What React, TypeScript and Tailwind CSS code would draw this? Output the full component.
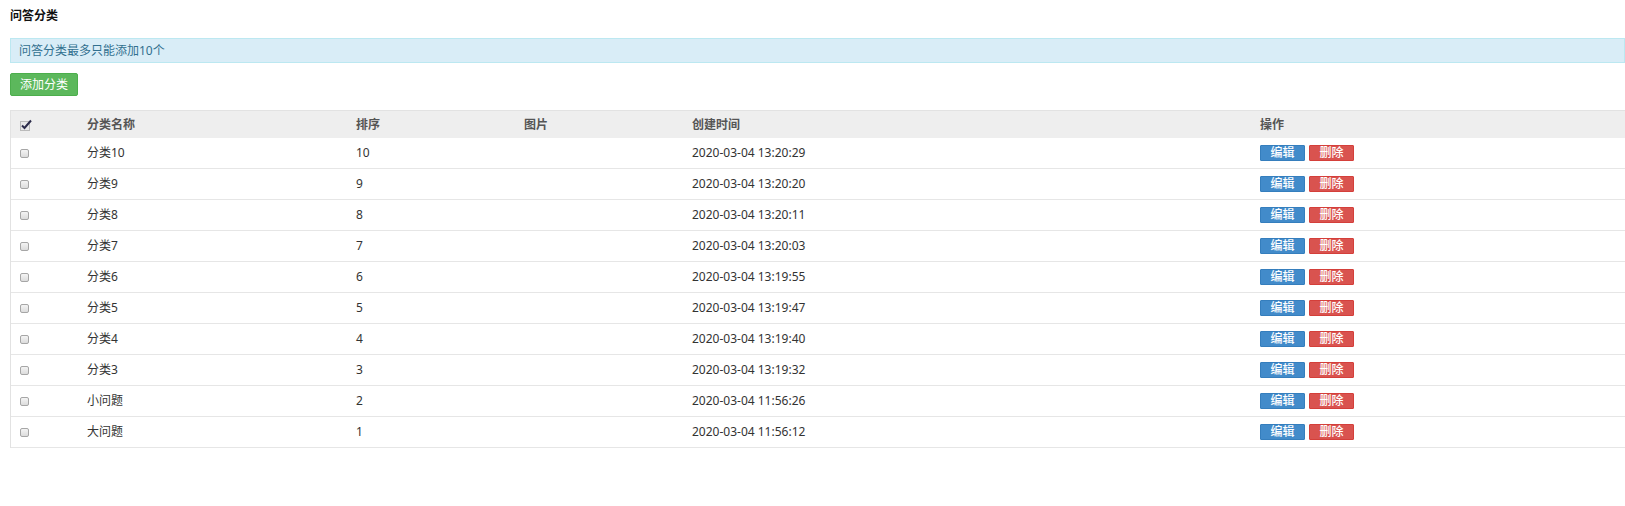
import React from "react";

const rows = [
  ["分类10", "10", "2020-03-04 13:20:29"],
  ["分类9", "9", "2020-03-04 13:20:20"],
  ["分类8", "8", "2020-03-04 13:20:11"],
  ["分类7", "7", "2020-03-04 13:20:03"],
  ["分类6", "6", "2020-03-04 13:19:55"],
  ["分类5", "5", "2020-03-04 13:19:47"],
  ["分类4", "4", "2020-03-04 13:19:40"],
  ["分类3", "3", "2020-03-04 13:19:32"],
  ["小问题", "2", "2020-03-04 11:56:26"],
  ["大问题", "1", "2020-03-04 11:56:12"],
];

const grid = "grid grid-cols-[68px_269px_168px_168px_568px_1fr] items-center";

function Box() {
  return <span className="block w-[9px] h-[9px] border border-[#a6a6a6] rounded-[2px] bg-gradient-to-b from-[#f4f4f4] to-[#dcdcdc]" />;
}

function CheckedBox() {
  return (
    <svg width="12" height="12" viewBox="0 0 12 12" className="block">
      <rect x="0.5" y="2.5" width="9" height="9" fill="#e8e8e8" stroke="#888" strokeDasharray="1 1" />
      <path d="M2 6.5 L4.5 9 L11 1.5" fill="none" stroke="#2b2b4a" strokeWidth="2" />
    </svg>
  );
}

export default function App() {
  return (
    <div
      className="w-[1625px] h-[506px] bg-white text-[12px] text-[#333]"
      style={{ fontFamily: '"Noto Sans","Noto Sans CJK SC",sans-serif' }}
    >
      <div className="pl-[10px]">
        <div className="pt-[6px] h-[26px] leading-[20px] font-bold text-[#111]">问答分类</div>
        <div className="mt-[12px] h-[25px] border border-[#bce8f1] bg-[#d9edf7] text-[#31708f] leading-[23px] pl-[8px]">
          问答分类最多只能添加10个
        </div>
        <div className="mt-[10px] h-[23px] w-[68px] bg-[#5cb85c] border border-[#4cae4c] rounded-[2px] text-white text-[12px] leading-[21px] text-center">
          添加分类
        </div>
        <div className="mt-[14px] border-l border-[#e2e2e2]">
          <div className={`${grid} h-[28px] bg-[#eeeeee] border-t border-[#e2e2e2] font-bold text-[#555]`}>
            <div className="pl-[9px]"><CheckedBox /></div>
            <div className="pl-[8px]">分类名称</div>
            <div className="pl-[8px]">排序</div>
            <div className="pl-[8px]">图片</div>
            <div className="pl-[8px]">创建时间</div>
            <div className="pl-[8px]">操作</div>
          </div>
          {rows.map((r) => (
            <div key={r[0]} className={`${grid} h-[31px] border-b border-[#e6e6e6]`}>
              <div className="pl-[9px]"><Box /></div>
              <div className="pl-[8px]">{r[0]}</div>
              <div className="pl-[8px]">{r[1]}</div>
              <div className="pl-[8px]"></div>
              <div className="pl-[8px]">{r[2]}</div>
              <div className="pl-[8px] flex gap-[4px]">
                <span className="w-[45px] h-[16px] leading-[14px] text-center text-white bg-[#428bca] border border-[#357ebd] rounded-[1px] text-[12px] font-medium">编辑</span>
                <span className="w-[45px] h-[16px] leading-[14px] text-center text-white bg-[#d9534f] border border-[#d43f3a] rounded-[1px] text-[12px] font-medium">删除</span>
              </div>
            </div>
          ))}
        </div>
      </div>
    </div>
  );
}
